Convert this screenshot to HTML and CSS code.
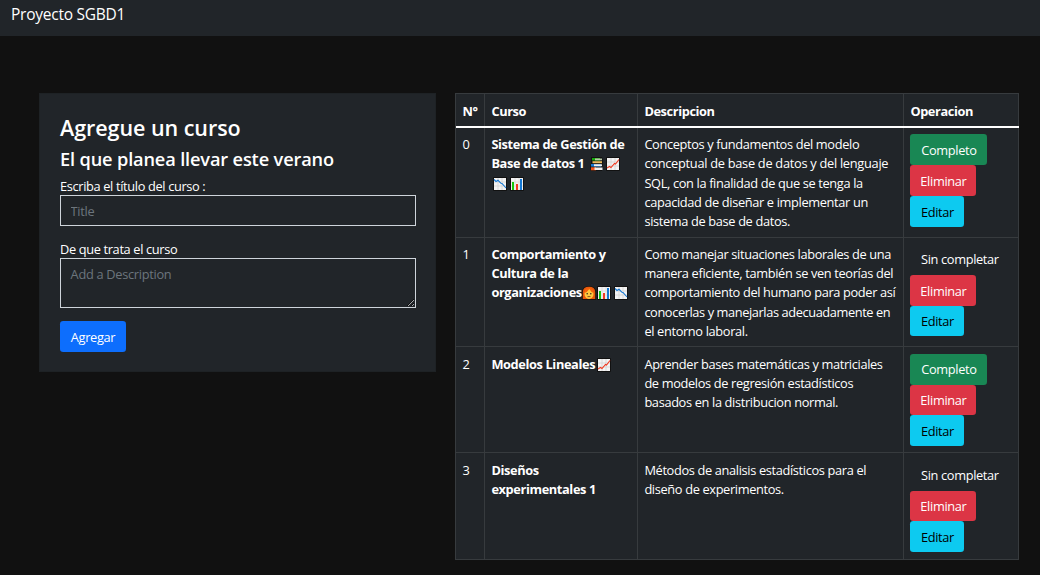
FILE: index.html
```html
<!DOCTYPE html>
<html lang="es">
<head>
<meta charset="utf-8">
<title>Proyecto SGBD1</title>
<link rel="stylesheet" href="styles.css">
</head>
<body>
<svg class="defs" aria-hidden="true">
  <symbol id="up" viewBox="0 0 14 14"><rect width="14" height="14" rx="1" fill="#111"/><rect x="1" y="1" width="12" height="12" fill="#f3f3f3"/><path d="M1 5h12M1 9h12M5 1v12M9 1v12" stroke="#d2d2d2" stroke-width=".8"/><path d="M1 11l2.500-1.500L5 10.500 8.500 6.500l1 .5L13 2.500" fill="none" stroke="#f03a20" stroke-width="1.100"/></symbol>
  <symbol id="down" viewBox="0 0 14 14"><rect width="14" height="14" rx="1" fill="#111"/><rect x="1" y="1" width="12" height="12" fill="#f3f3f3"/><path d="M1 5h12M1 9h12M5 1v12M9 1v12" stroke="#d2d2d2" stroke-width=".8"/><path d="M1 2.500l2 2L5 3.300l3 3 1 .2L13 11" fill="none" stroke="#1478d4" stroke-width="1.100"/></symbol>
  <symbol id="bars" viewBox="0 0 14 14"><rect width="14" height="14" rx="1" fill="#111"/><rect x="1" y="1" width="12" height="12" fill="#f3f3f3"/><path d="M1 5h12M1 9h12M5 1v12M9 1v12" stroke="#d8d8d8" stroke-width=".8"/><path d="M2 5h2v8H2z" fill="#16c60c"/><path d="M6 7h2v6H6z" fill="#f03a20"/><path d="M10 2h2v11h-2z" fill="#1478d4"/></symbol>
  <symbol id="books" viewBox="0 0 14 14"><path d="M1 0h11l1 4-1 10H1L0 10l1-3z" fill="#111"/><path d="M2 1h8v2.500H2z" fill="#16a80c"/><path d="M5 1.500h7v1.800H5z" fill="#b9c9a8"/><path d="M2.500 4.200H12v2H2.500z" fill="#e8b95c"/><path d="M1 7h10v2.600H1z" fill="#1478d4"/><path d="M4 7.300h8v1.900H4z" fill="#f1f1f1"/><path d="M1 10.300h5v3H1z" fill="#f0561d"/><path d="M4.500 10.500h8v2.500h-8z" fill="#eee"/></symbol>
  <symbol id="woman" viewBox="0 0 14 14"><path d="M0 14V6Q0 0 7 0t7 6v8z" fill="#1a1410"/><path d="M.8 13V6Q1 .8 7 .8T13.200 6v7z" fill="#e8590c"/><ellipse cx="7" cy="8" rx="4.500" ry="5" fill="#ffc83d"/><path d="M2.500 7Q5.500 6 7.300 3 9 6 11.500 7V4L8 1.500 3.500 3z" fill="#f7630c"/><circle cx="5.200" cy="7.800" r=".75" fill="#222"/><circle cx="8.800" cy="7.800" r=".75" fill="#222"/><path d="M5.500 10.600h3" fill="none" stroke="#64381c" stroke-width=".8"/></symbol>
</svg>
<nav class="navbar"><span class="brand">Proyecto SGBD1</span></nav>
<main class="layout">
  <form class="card">
    <h3 class="title">Agregue un curso</h3>
    <h4 class="subtitle">El que planea llevar este verano</h4>
    <label class="label" for="t">Escriba el título del curso :</label>
    <input class="field" id="t" placeholder="Title">
    <label class="label label-second" for="d">De que trata el curso</label>
    <textarea class="field area" id="d" placeholder="Add a Description"></textarea>
    <button class="btn primary" type="button">Agregar</button>
  </form>
  <table class="table">
    <colgroup><col class="c1"><col class="c2"><col class="c3"><col class="c4"></colgroup>
    <thead><tr class="head"><th>N°</th><th>Curso</th><th>Descripcion</th><th>Operacion</th></tr></thead>
    <tbody>
      <tr class="r1"><td>0</td>
        <td class="name">Sistema de Gestión de<br>Base de datos 1 <svg class="emoji first"><use href="#books"/></svg><svg class="emoji"><use href="#up"/></svg><br><svg class="emoji"><use href="#down"/></svg><svg class="emoji"><use href="#bars"/></svg></td>
        <td>Conceptos y fundamentos del modelo<br><span class="wide">conceptual de base de datos y del lenguaje</span><br>SQL, con la finalidad de que se tenga la<br>capacidad de diseñar e implementar un<br>sistema de base de datos.</td>
        <td><div class="ops"><button class="btn success">Completo</button><button class="btn danger">Eliminar</button><button class="btn info">Editar</button></div></td></tr>
      <tr class="r2"><td>1</td>
        <td class="name">Comportamiento y<br>Cultura de la<br>organizaciones<svg class="emoji face"><use href="#woman"/></svg><svg class="emoji"><use href="#bars"/></svg><svg class="emoji"><use href="#down"/></svg></td>
        <td>Como manejar situaciones laborales de una<br>manera eficiente, también se ven teorías del<br>comportamiento del humano para poder así<br><span class="tight">conocerlas y manejarlas adecuadamente en</span><br>el entorno laboral.</td>
        <td><div class="ops"><button class="btn plain">Sin completar</button><button class="btn danger">Eliminar</button><button class="btn info">Editar</button></div></td></tr>
      <tr class="r3"><td>2</td>
        <td class="name">Modelos Lineales<svg class="emoji"><use href="#up"/></svg></td>
        <td>Aprender bases matemáticas y matriciales<br>de modelos de regresión estadísticos<br>basados en la distribucion normal.</td>
        <td><div class="ops"><button class="btn success">Completo</button><button class="btn danger">Eliminar</button><button class="btn info">Editar</button></div></td></tr>
      <tr class="r4"><td>3</td>
        <td class="name">Diseños<br>experimentales 1</td>
        <td>Métodos de analisis estadísticos para el<br>diseño de experimentos.</td>
        <td><div class="ops"><button class="btn plain">Sin completar</button><button class="btn danger">Eliminar</button><button class="btn info">Editar</button></div></td></tr>
    </tbody>
  </table>
</main>
</body>
</html>
```
FILE: styles.css
```css
* { box-sizing: border-box; }
body {
  margin: 0;
  height: 575px;
  overflow: hidden;
  background: #111;
  color: #fff;
  font: 12.8px/19.2px "Segoe UI", "Open Sans", "Noto Sans", sans-serif;
  letter-spacing: -0.35px;
}
.defs { display: none; }
.navbar { height: 36px; padding: 2px 11px; background: #212529; }
.brand { font-size: 15.5px; line-height: 24px; letter-spacing: -0.25px; }
.layout { display: flex; align-items: flex-start; gap: 19px; padding: 57px 0 0 39px; }
.card {
  display: flex;
  flex-direction: column;
  width: 397px;
  height: 279px;
  padding: 19px 19px 0 20px;
  background: #212529;
  border: 1px solid #1e2225;
}
.title, .subtitle { margin: 0; font-weight: 600; white-space: nowrap; }
.title { font-size: 21.5px; line-height: 30px; letter-spacing: -0.05px; }
.subtitle { font-size: 18.2px; line-height: 32px; letter-spacing: -0.15px; }
.label { height: 20px; line-height: 22px; }
.label-second { height: 19px; margin-top: 13px; line-height: 20px; }
.field {
  display: block;
  width: 356px;
  height: 31px;
  padding: 5px 9.6px;
  color: #fff;
  background: #212529;
  border: 1px solid #ced4da;
  border-radius: 0;
  outline: 0;
  font: inherit;
  letter-spacing: -0.3px;
}
.field::placeholder { color: #6c757d; opacity: 1; }
.area { height: 50px; margin: 0 0 13px; padding-top: 6px; resize: vertical; }
.btn {
  align-self: flex-start;
  height: 30.8px;
  padding: 1px 0 0;
  border: 0;
  border-radius: 3.2px;
  color: #fff;
  font: inherit;
  letter-spacing: inherit;
  text-align: center;
  white-space: nowrap;
}
.primary { width: 66px; height: 31px; padding-top: 2px; background: #0d6efd; }
.success { width: 77px; background: #198754; }
.danger { width: 66px; background: #dc3545; }
.info { width: 54px; background: #0dcaf0; color: #000; }
.plain { width: 99px; background: transparent; }
.r1 .danger, .r1 .info, .r2 .danger { padding-top: 2px; }
.r2 .btn, .r3 .btn, .r4 .btn { height: 30.7px; }
.table {
  width: 564px;
  table-layout: fixed;
  border-collapse: separate;
  border-spacing: 0;
  border-top: 1px solid #373b3e;
  border-left: 1px solid #373b3e;
  background: #212529;
}
.c1 { width: 29px; }
.c2 { width: 153px; }
.c3 { width: 266px; }
.c4 { width: 115px; }
th, td {
  padding: 7.2px 0 0 6.4px;
  border-right: 1px solid #373b3e;
  border-bottom: 1px solid #373b3e;
  text-align: left;
  vertical-align: top;
  white-space: nowrap;
}
th { padding-top: 8px; border-bottom: 0; letter-spacing: -0.4px; }
.head { height: 34px; }
.r1 { height: 110px; }
.r1 td { box-shadow: 0 -2px #fff; }
.r2 { height: 109px; }
.r2 td { padding-top: 6.9px; }
.r3 { height: 106px; }
.r4 { height: 107px; }
.r3 td, .r4 td { padding-top: 7.9px; }
.name { font-weight: 700; letter-spacing: -0.38px; }
.wide { letter-spacing: -0.28px; }
.tight { letter-spacing: -0.4px; }
.ops { display: flex; flex-direction: column; align-items: flex-start; margin-top: -0.9px; }
.r2 .ops { margin-top: -0.7px; }
.emoji { width: 14px; height: 14px; margin: 0 1px 0 2px; vertical-align: -3px; }
.first { margin: 0 0 0 2px; }
.face { margin: 0 -1px 0 0; }
```
